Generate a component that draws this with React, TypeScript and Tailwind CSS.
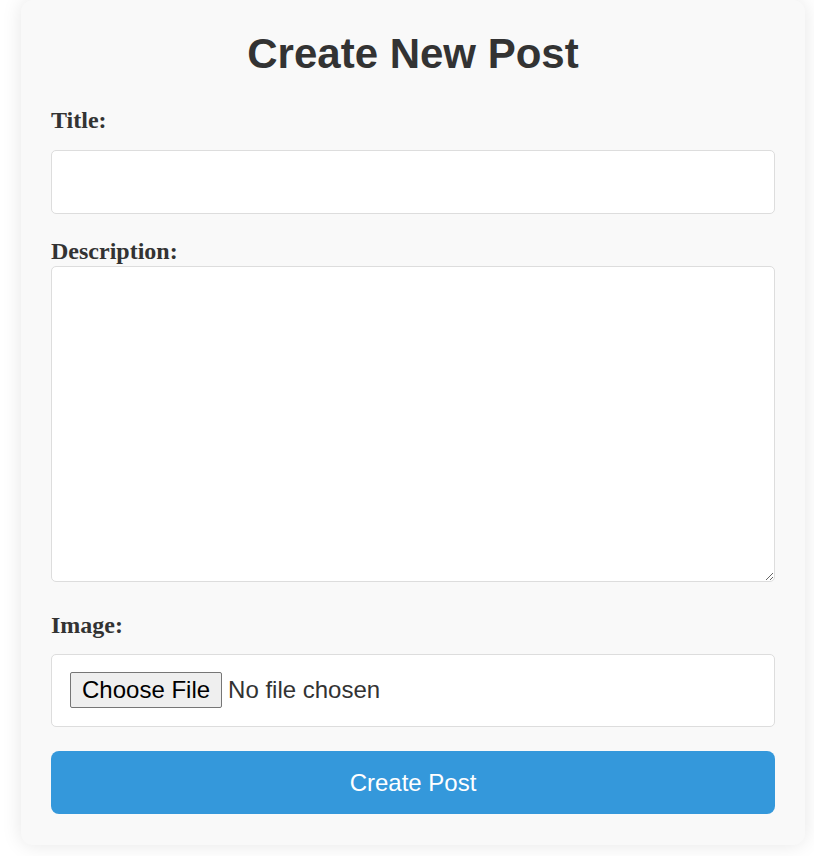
import React from "react";

function CreatePost() {
  return (
    <div className="min-h-screen w-full bg-white font-['Liberation_Sans',Arial,sans-serif]">
      <div className="ml-[21px] w-[784px] rounded-[12px] bg-[#f9f9f9] px-[30px] pt-[30px] pb-[31px] shadow-[0_0_20px_rgba(0,0,0,0.1)]">
        <h1 className="text-center text-[42px] font-bold leading-[48px] text-[#333]">
          Create New Post
        </h1>
        <form className="flex flex-col" onSubmit={(e) => e.preventDefault()}>
          <label className="mt-[28px] block font-['Liberation_Serif','Times_New_Roman',serif] text-[24px] font-bold leading-[28px] text-[#333]">
            Title:
          </label>
          <input
            type="text"
            className="mt-[16px] block h-[64px] w-full rounded-[5px] border border-[#ddd] bg-white px-[10px] text-[22px] outline-none"
          />
          <label className="mt-[23px] block font-['Liberation_Serif','Times_New_Roman',serif] text-[24px] font-bold leading-[28px] text-[#333]">
            Description:
          </label>
          <textarea className="mt-[1px] block h-[316px] w-full rounded-[5px] border border-[#ddd] bg-white p-[10px] text-[22px] outline-none" />
          <label className="mt-[29px] block font-['Liberation_Serif','Times_New_Roman',serif] text-[24px] font-bold leading-[28px] text-[#333]">
            Image:
          </label>
          <input
            type="file"
            className="mt-[15px] block w-full rounded-[5px] border border-[#ddd] bg-white px-[18px] pt-[17px] pb-[18px] text-[24px] leading-[28px] text-[#333] file:mr-[6px] file:rounded-[2px] file:border file:border-solid file:border-[#767676] file:bg-[#efefef] file:px-[11px] file:py-[3px] file:text-[24px] file:leading-[28px] file:text-black"
          />
          <button
            type="submit"
            className="mt-[24px] h-[63px] w-full rounded-[8px] bg-[#3498db] text-[24px] text-white"
          >
            Create Post
          </button>
        </form>
      </div>
    </div>
  );
}

export default function App() {
  return <CreatePost />;
}
